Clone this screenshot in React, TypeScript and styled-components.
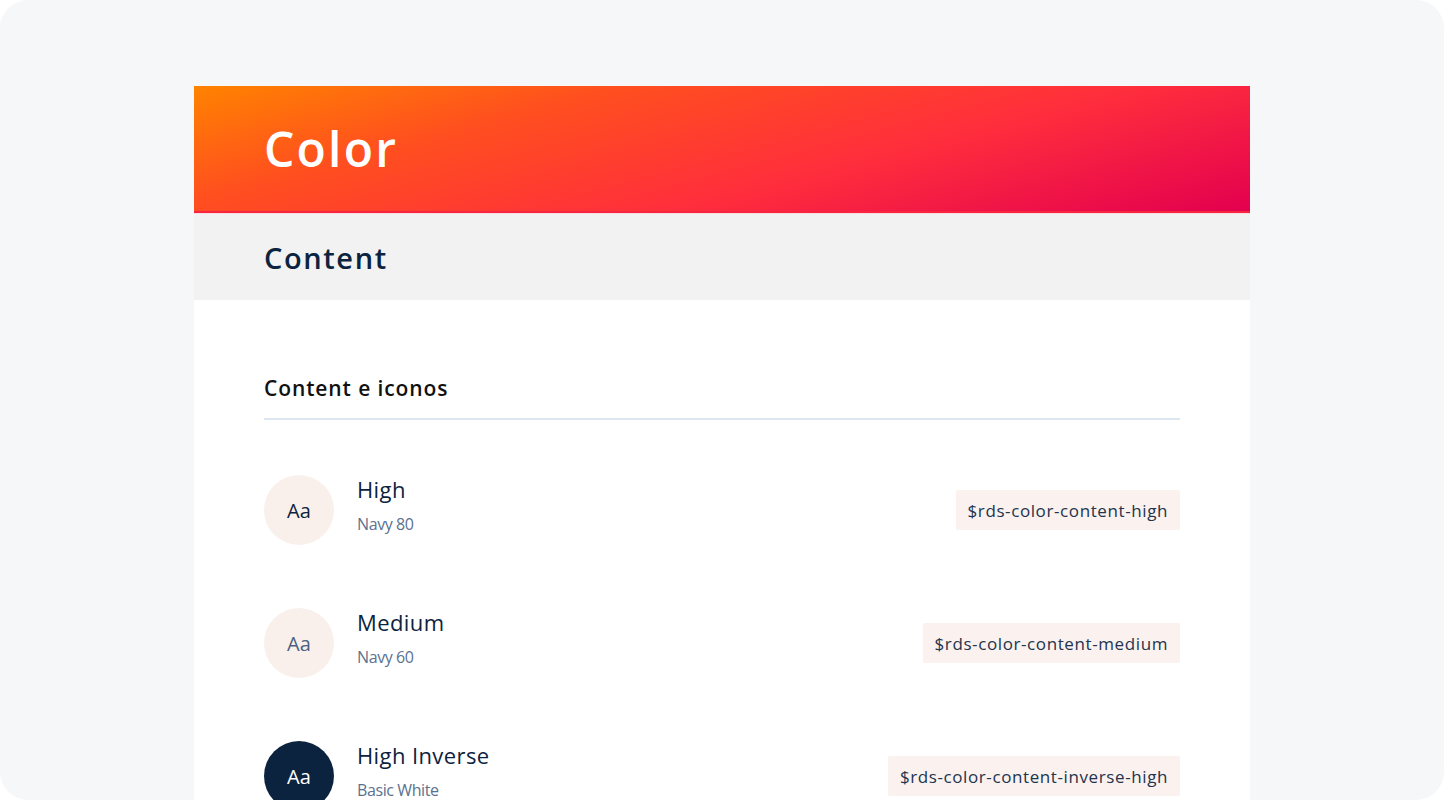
import React from "react";
import styled, { createGlobalStyle } from "styled-components";

const Global = createGlobalStyle`
  html, body { margin: 0; padding: 0; background: #ffffff; }
  body { font-family: "Open Sans", sans-serif; }
`;

const Frame = styled.div`
  width: 1444px;
  height: 800px;
  box-sizing: border-box;
  background: #f6f7f9;
  border-radius: 28px;
  overflow: hidden;
  padding: 86px 194px 0;
`;

const Card = styled.div`
  background: #ffffff;
  height: 714px;
  overflow: hidden;
  display: flex;
  flex-direction: column;
`;

const Hero = styled.header`
  height: 127px;
  flex-shrink: 0;
  box-sizing: border-box;
  padding: 0 70px;
  display: flex;
  align-items: center;
  background: linear-gradient(165deg, #ff8300 0%, #ff4f1f 28%, #ff2e3c 62%, #e3004f 100%);
  border-bottom: 2px solid #f9243f;
`;

const HeroTitle = styled.h1`
  margin: 0;
  font-family: "Open Sans", sans-serif;
  font-weight: 600;
  font-size: 48px;
  letter-spacing: 2.2px;
  color: #ffffff;
`;

const Band = styled.div`
  height: 87px;
  flex-shrink: 0;
  box-sizing: border-box;
  border-top: 1px solid #f6dede;
  background: #f2f2f2;
  padding: 0 70px;
  display: flex;
  align-items: center;
`;

const BandTitle = styled.h2`
  margin: 0;
  font-family: "Open Sans", sans-serif;
  font-weight: 600;
  font-size: 29px;
  letter-spacing: 1.6px;
  color: #0c2340;
`;

const Body = styled.section`
  padding: 74px 70px 0;
  display: flex;
  flex-direction: column;
`;

const SectionTitle = styled.h3`
  margin: 0;
  padding-bottom: 16px;
  border-bottom: 2px solid #dde6f0;
  font-family: "Open Sans", sans-serif;
  font-weight: 600;
  font-size: 21px;
  letter-spacing: 0.9px;
  color: #111111;
`;

const List = styled.div`
  display: flex;
  flex-direction: column;
  gap: 63px;
  padding-top: 55px;
`;

const Row = styled.div`
  display: flex;
  align-items: center;
  gap: 23px;
  height: 70px;
`;

const Swatch = styled.div<{ $bg: string; $fg: string }>`
  width: 70px;
  height: 70px;
  border-radius: 50%;
  background: ${(p) => p.$bg};
  color: ${(p) => p.$fg};
  display: flex;
  align-items: center;
  justify-content: center;
  font-family: "Open Sans", sans-serif;
  font-size: 20px;
  font-weight: 500;
  flex-shrink: 0;
`;

const Info = styled.div`
  display: flex;
  flex-direction: column;
  gap: 9px;
  flex: 1;
  margin-top: -12px;
`;

const Name = styled.div`
  font-family: "Open Sans", sans-serif;
  font-size: 22px;
  font-weight: 500;
  letter-spacing: 0.4px;
  color: #0c2340;
`;

const Sub = styled.div`
  font-family: "Open Sans", sans-serif;
  font-size: 16px;
  letter-spacing: -0.4px;
  color: #5b7190;
`;

const Token = styled.code`
  background: #fbf1ee;
  border-radius: 2px;
  height: 40px;
  box-sizing: border-box;
  padding: 0 12px;
  display: flex;
  align-items: center;
  font-family: "Open Sans", sans-serif;
  font-weight: 500;
  font-size: 17px;
  letter-spacing: 0.6px;
  color: #22344f;
`;

const rows = [
  { name: "High", sub: "Navy 80", bg: "#f9f0ec", fg: "#0c2340", token: "$rds-color-content-high" },
  { name: "Medium", sub: "Navy 60", bg: "#f9f0ec", fg: "#4b6282", token: "$rds-color-content-medium" },
  { name: "High Inverse", sub: "Basic White", bg: "#0c2340", fg: "#ffffff", token: "$rds-color-content-inverse-high" },
];

export default function App() {
  return (
    <>
      <Global />
      <Frame>
        <Card>
          <Hero>
            <HeroTitle>Color</HeroTitle>
          </Hero>
          <Band>
            <BandTitle>Content</BandTitle>
          </Band>
          <Body>
            <SectionTitle>Content e iconos</SectionTitle>
            <List>
              {rows.map((r) => (
                <Row key={r.name}>
                  <Swatch $bg={r.bg} $fg={r.fg}>Aa</Swatch>
                  <Info>
                    <Name>{r.name}</Name>
                    <Sub>{r.sub}</Sub>
                  </Info>
                  <Token>{r.token}</Token>
                </Row>
              ))}
            </List>
          </Body>
        </Card>
      </Frame>
    </>
  );
}
